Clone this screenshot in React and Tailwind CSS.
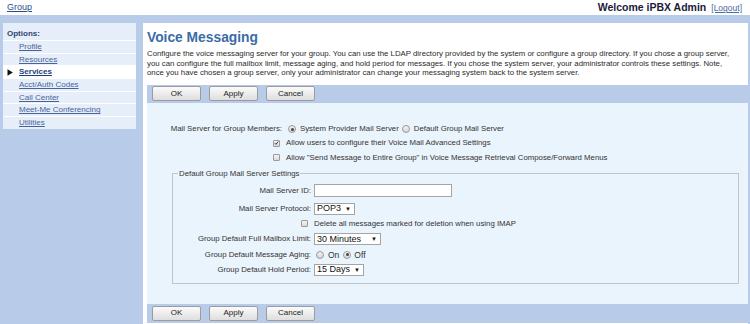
const Btn = ({ children }) => (
  <button className="w-[49px] h-[15px] border border-[#9c9c9c] rounded-[2px] bg-gradient-to-b from-[#fbfbfb] to-[#dedede] text-[8px] leading-none text-[#222]">
    {children}
  </button>
);

const Bar = ({ h }) => (
  <div className={`${h} bg-[#b8cbe8] flex items-center pl-[5px] gap-[8px]`}>
    <Btn>OK</Btn>
    <Btn>Apply</Btn>
    <Btn>Cancel</Btn>
  </div>
);

const Radio = ({ checked }) => (
  <span className="w-[8px] h-[8px] rounded-full border border-[#9a9a9a] bg-gradient-to-b from-[#f4f4f4] to-[#d6d6d6] flex items-center justify-center shrink-0">
    {checked && <span className="w-[3px] h-[3px] rounded-full bg-[#444]" />}
  </span>
);

const Check = ({ checked }) => (
  <span className="w-[7px] h-[7px] rounded-[1px] border border-[#9a9a9a] bg-gradient-to-b from-[#f6f6f6] to-[#d8d8d8] flex items-center justify-center shrink-0">
    {checked && (
      <svg width="6" height="6" viewBox="0 0 6 6">
        <path d="M1 3.2 L2.4 4.6 L5 1.2" stroke="#333" strokeWidth="1.2" fill="none" />
      </svg>
    )}
  </span>
);

const Select = ({ w, children }) => (
  <span className={`${w} h-[12px] border border-[#a5a5a5] bg-white flex items-center justify-between pl-[2px] pr-[3px] text-[9px] leading-none text-[#111]`}>
    <span>{children}</span>
    <span className="text-[6px]">▼</span>
  </span>
);

const navItems = ["Profile", "Resources", "Services", "Acct/Auth Codes", "Call Center", "Meet-Me Conferencing", "Utilities"];

export default function App() {
  return (
    <div className="w-[750px] h-[324px] overflow-hidden bg-white flex flex-col font-['Liberation_Sans',Arial,sans-serif]">
      <div className="h-[15px] flex items-center justify-between pl-[7px] pr-[8px] shrink-0">
        <a className="text-[9px] leading-none text-[#2b4f86] underline">Group</a>
        <div className="flex items-baseline gap-[5px]">
          <span className="text-[10.5px] leading-none font-bold text-[#1b1b3a]">Welcome iPBX Admin</span>
          <a className="text-[8.5px] leading-none underline text-[#4a6aa0]">[Logout]</a>
        </div>
      </div>
      <div className="flex-1 bg-[#b8cbe8] flex pt-[8px] pl-[3px] pr-[2px] gap-[7px]">
        <div className="w-[133px] self-start bg-[#e6eef9] flex flex-col">
          <div className="h-[17px] pt-[6px] pl-[4px] text-[8px] leading-[9px] font-bold text-[#2d466f]">Options:</div>
          {navItems.map((n) => (
            <div
              key={n}
              className={`h-[12.7px] border-t border-white flex items-center ${n === "Services" ? "bg-white" : ""}`}
            >
              <span className="w-[16px] flex items-center pl-[4px]">
                {n === "Services" && (
                  <svg width="6" height="7" viewBox="0 0 6 7">
                    <path d="M0.5 0.3 L5.8 3.5 L0.5 6.7 Z" fill="#111" />
                  </svg>
                )}
              </span>
              <a
                className={`text-[8px] leading-none underline ${
                  n === "Services" ? "font-bold text-[#1e3f7c]" : "text-[#46649a]"
                }`}
              >
                {n}
              </a>
            </div>
          ))}
        </div>
        <div className="flex-1 bg-white pl-[4px] flex flex-col">
          <div className="pt-[6px] text-[13.8px] leading-[17px] font-bold text-[#3b6ca6]">Voice Messaging</div>
          <div className="mt-[3px] text-[7.8px] leading-[9.6px] text-[#2a2a2a] whitespace-nowrap">
            <div>Configure the voice messaging server for your group. You can use the LDAP directory provided by the system or configure a group directory. If you chose a group server,</div>
            <div>you can configure the full mailbox limit, message aging, and hold period for messages. If you chose the system server, your administrator controls these settings. Note,</div>
            <div>once you have chosen a group server, only your administrator can change your messaging system back to the system server.</div>
          </div>
          <div className="mt-[7px]">
            <Bar h="h-[18px]" />
          </div>
          <div className="h-[201px] bg-[#eaf4fc] flex flex-col text-[7.8px] leading-none text-[#333]">
            <div className="mt-[20.5px] h-[12px] flex items-center">
              <span className="w-[135px] text-right">Mail Server for Group Members:</span>
              <span className="ml-[6px]"><Radio checked /></span>
              <span className="ml-[4px]">System Provider Mail Server</span>
              <span className="ml-[3px]"><Radio /></span>
              <span className="ml-[4px]">Default Group Mail Server</span>
            </div>
            <div className="mt-[2px] h-[12px] flex items-center pl-[126px]">
              <Check checked />
              <span className="ml-[6px]">Allow users to configure their Voice Mail Advanced Settings</span>
            </div>
            <div className="mt-[2.5px] h-[12px] flex items-center pl-[126px]">
              <Check />
              <span className="ml-[6px]">Allow "Send Message to Entire Group" in Voice Message Retrieval Compose/Forward Menus</span>
            </div>
            <fieldset className="mt-[5.5px] ml-[25px] mr-[9px] border border-[#c4c4c4] pb-[6px]">
              <legend className="ml-[5px] px-[1px] text-[7.8px] leading-[9px] text-[#333]">Default Group Mail Server Settings</legend>
              <div className="mt-[5.5px] h-[14px] flex items-center">
                <span className="w-[138px] text-right">Mail Server ID:</span>
                <span className="ml-[3px] w-[138px] h-[13px] border border-[#a5a5a5] bg-white" />
              </div>
              <div className="mt-[4px] h-[14px] flex items-center">
                <span className="w-[138px] text-right">Mail Server Protocol:</span>
                <span className="ml-[3px]"><Select w="w-[41px]">POP3</Select></span>
              </div>
              <div className="mt-[1px] h-[14px] flex items-center pl-[128px]">
                <Check />
                <span className="ml-[6px]">Delete all messages marked for deletion when using IMAP</span>
              </div>
              <div className="mt-[1.5px] h-[14px] flex items-center">
                <span className="w-[138px] text-right">Group Default Full Mailbox Limit:</span>
                <span className="ml-[3px]"><Select w="w-[67px]">30 Minutes</Select></span>
              </div>
              <div className="mt-[1.5px] h-[14px] flex items-center">
                <span className="w-[138px] text-right">Group Default Message Aging:</span>
                <span className="ml-[5px]"><Radio /></span>
                <span className="ml-[4px] text-[8.5px]">On</span>
                <span className="ml-[4px]"><Radio checked /></span>
                <span className="ml-[3px] text-[8.5px]">Off</span>
              </div>
              <div className="mt-[1px] h-[14px] flex items-center">
                <span className="w-[138px] text-right">Group Default Hold Period:</span>
                <span className="ml-[3px]"><Select w="w-[50px]">15 Days</Select></span>
              </div>
            </fieldset>
          </div>
          <Bar h="h-[19px]" />
        </div>
      </div>
    </div>
  );
}
